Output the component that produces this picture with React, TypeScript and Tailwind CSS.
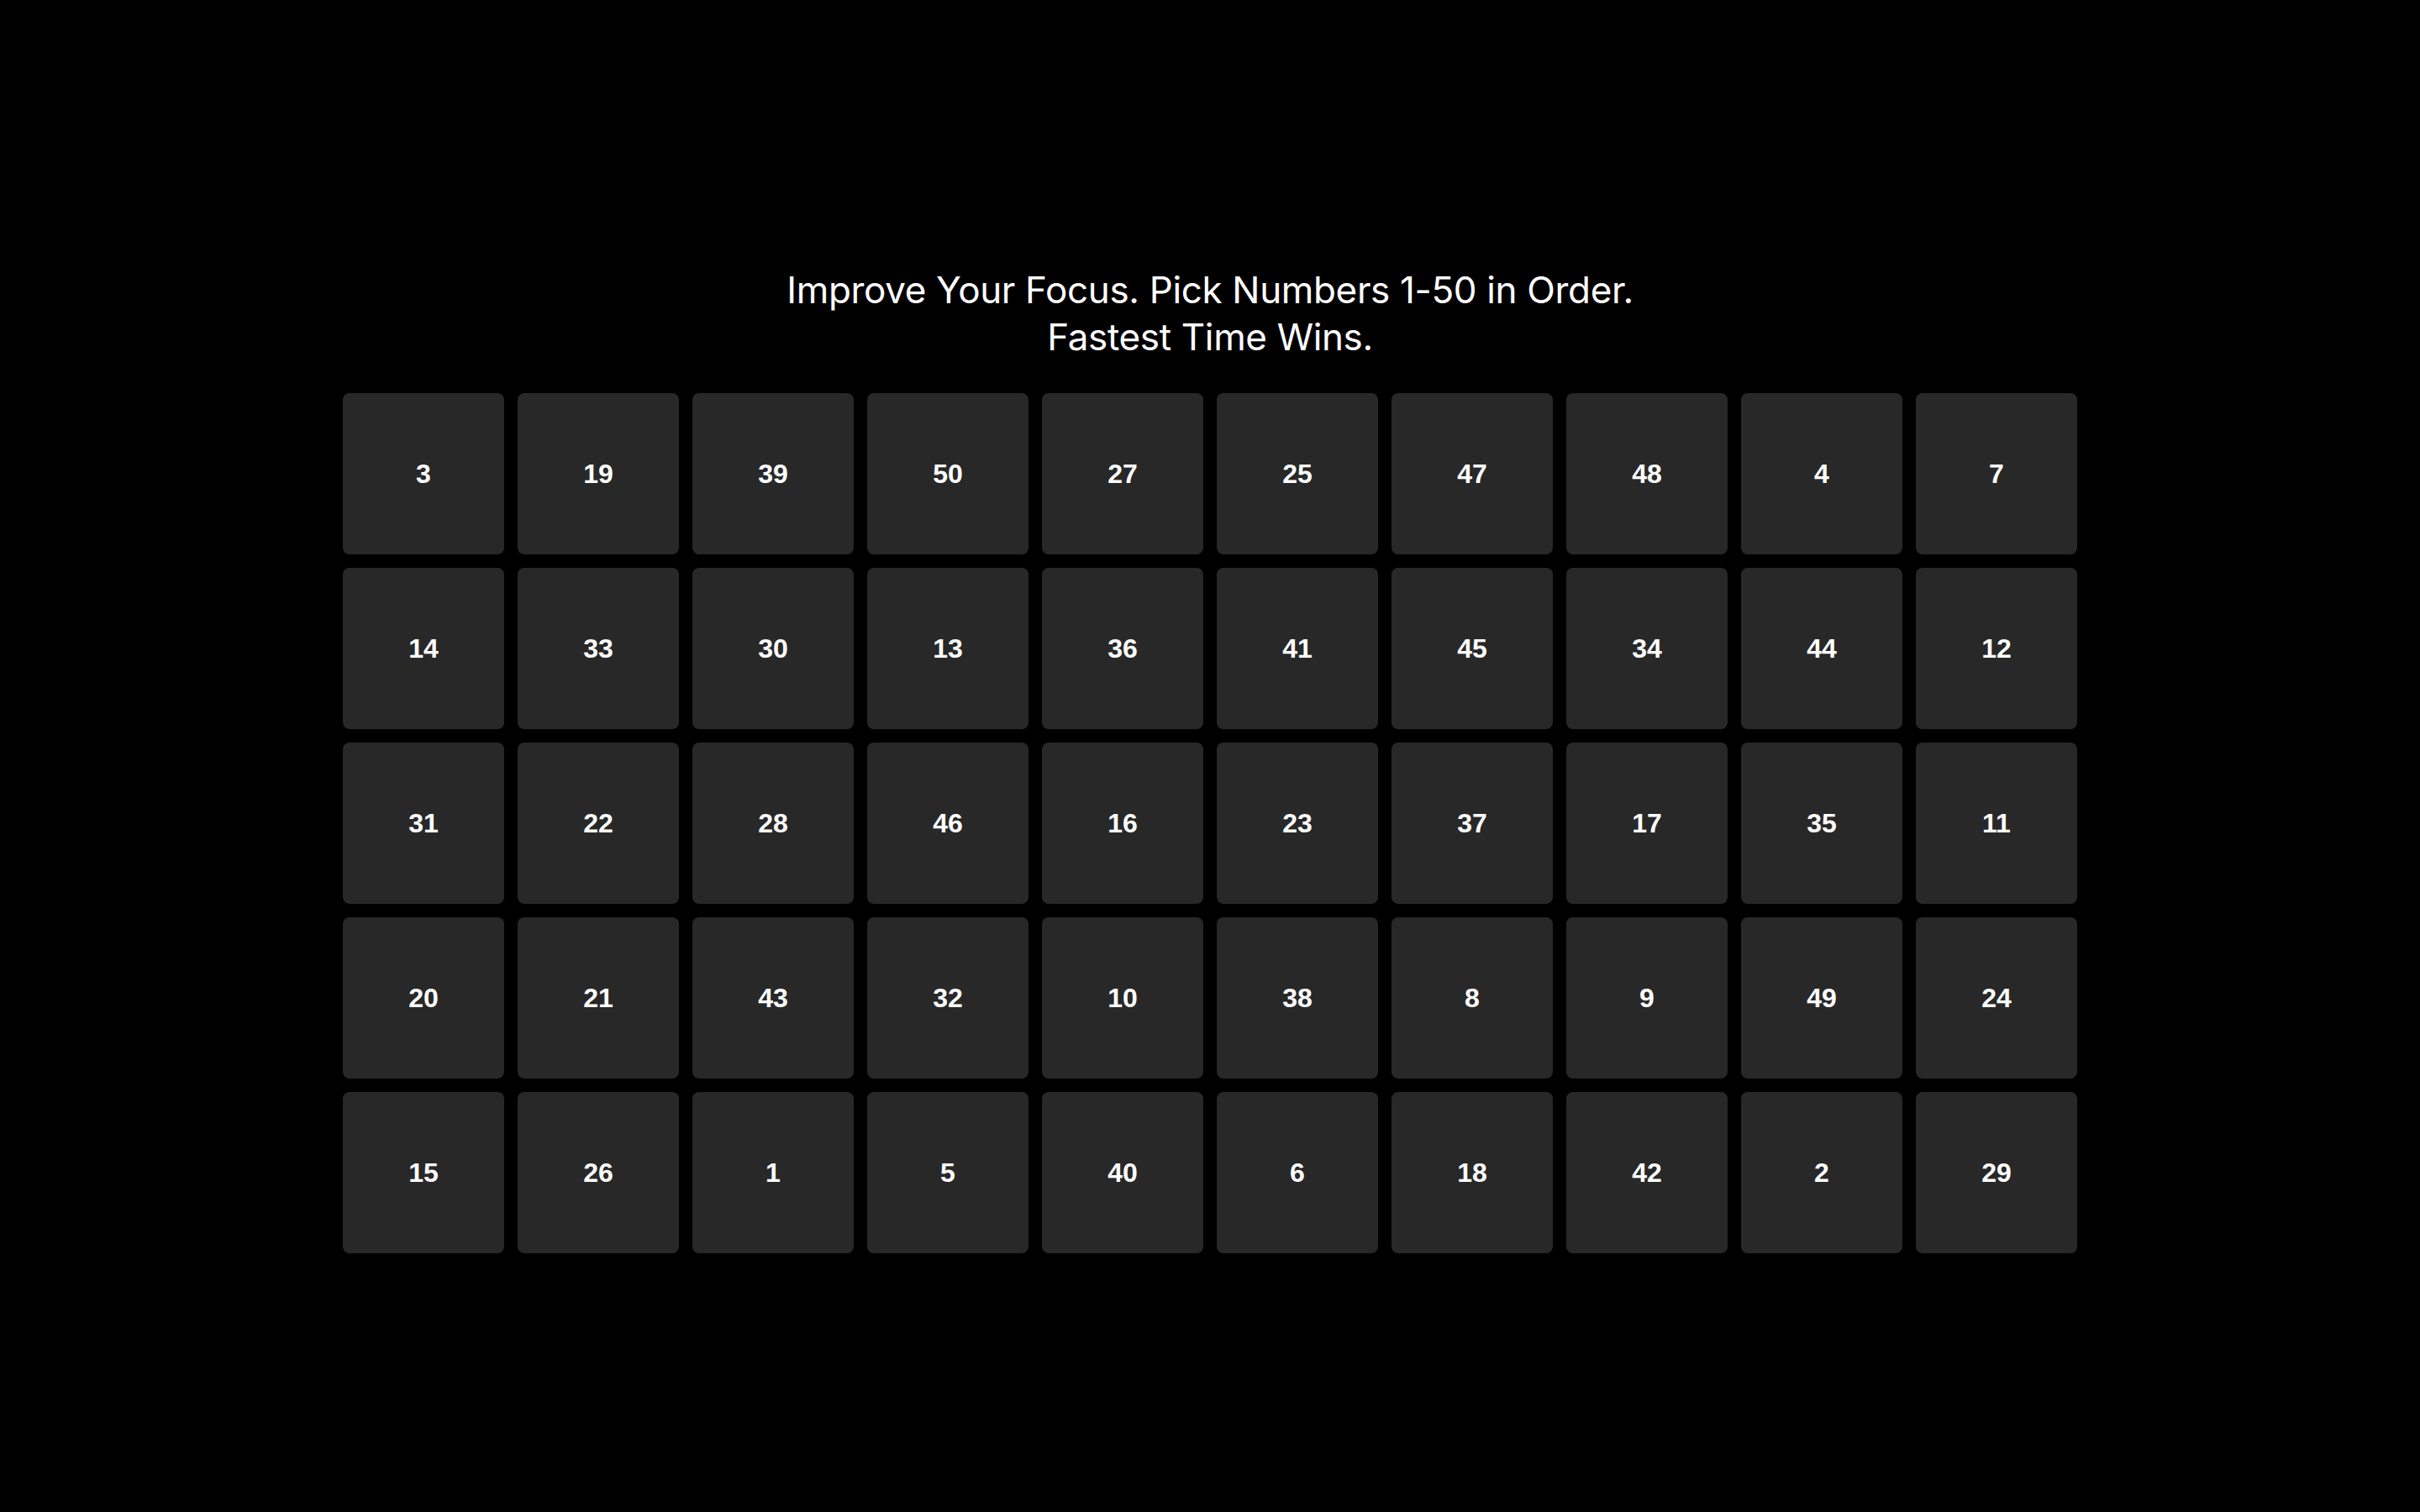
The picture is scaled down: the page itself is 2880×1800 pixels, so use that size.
import React from "react";

const nums = [
  3, 19, 39, 50, 27, 25, 47, 48, 4, 7,
  14, 33, 30, 13, 36, 41, 45, 34, 44, 12,
  31, 22, 28, 46, 16, 23, 37, 17, 35, 11,
  20, 21, 43, 32, 10, 38, 8, 9, 49, 24,
  15, 26, 1, 5, 40, 6, 18, 42, 2, 29,
];

export default function App() {
  return (
    <div className="min-h-screen w-full bg-black flex flex-col items-center pt-[317px]">
      <h1
        className="text-white text-center text-[44px] leading-[56px] font-normal tracking-[-0.35px]"
        style={{ fontFamily: "Inter, 'Noto Sans', sans-serif" }}
      >
        Improve Your Focus. Pick Numbers 1-50 in Order.
        <br />
        Fastest Time Wins.
      </h1>
      <div className="mt-[39px] grid grid-cols-10 gap-4">
        {nums.map((n) => (
          <button
            key={n}
            className="w-[192px] h-[192px] rounded-lg bg-[#282828] text-white text-[32px] font-bold flex items-center justify-center"
            style={{ fontFamily: "'Liberation Sans', Arial, sans-serif" }}
          >
            {n}
          </button>
        ))}
      </div>
    </div>
  );
}
